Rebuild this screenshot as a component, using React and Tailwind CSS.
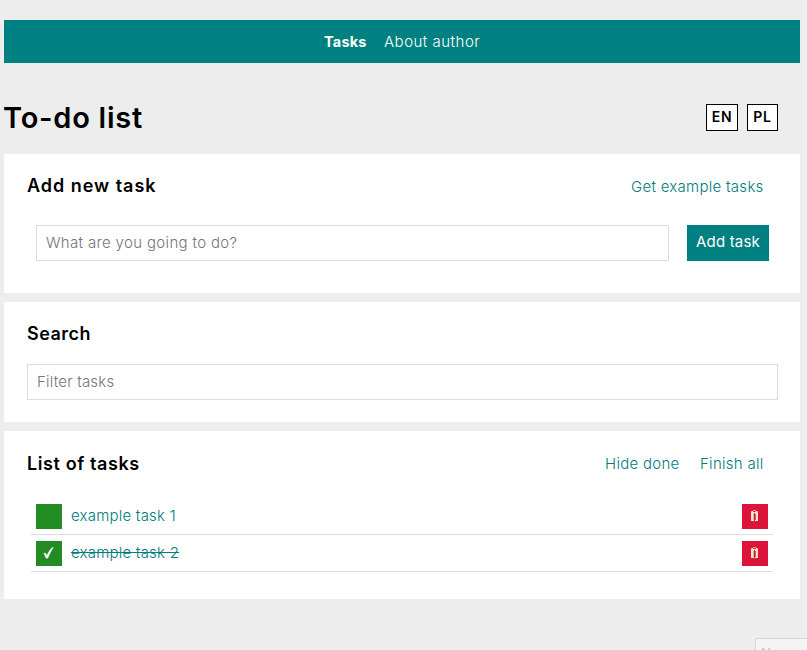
const tasks = [
  { id: 1, name: "example task 1", done: false },
  { id: 2, name: "example task 2", done: true },
];

function TrashIcon() {
  return (
    <svg width="8" height="13" viewBox="0 0 8 13" shapeRendering="crispEdges">
      <path fill="#fbe3c4" d="M0 1h7v2H0zM0 3h3v8H0zM4 3h3v8H4z" />
      <path fill="#e6a79a" d="M2 0h3v1H2zM0 1h1v1H0zM6 1h1v1H6z" />
      <path fill="#c2452f" d="M2 1h3v1H2zM2 11h3v1H2z" />
      <path fill="#dcb0a0" d="M2 4h1v6H2z" />
      <path fill="#a97a83" d="M4 4h1v6H4z" />
    </svg>
  );
}

function CheckIcon() {
  return (
    <svg className="-ml-0.5" width="11" height="12" viewBox="0 0 12 13">
      <path fill="#fff" stroke="#fff" strokeWidth=".4" d="M.8 7.300C1.600 6.300 2.700 6.300 3.200 7.300L4.200 9.200C5.800 5.800 7.700 2.700 9.800.8L11.400.6C9.100 3.800 7.200 7.600 5.400 11.900L3.300 12.300C2.700 10.300 1.800 8.300.8 7.300Z" />
    </svg>
  );
}

function LinkButton({ children, className }) {
  return <button className={`text-left tracking-[0.28px] whitespace-nowrap text-[#007b7b] ${className}`}>{children}</button>;
}

export default function App() {
  return (
    <div className="relative h-[650px] w-[807px] overflow-hidden bg-[#ededed] pt-5 pl-1 font-['Inter','Open_Sans',sans-serif] text-[15px] leading-[18px] font-light text-black">
      <div className="w-[796px]">
        <nav className="flex h-[43px] items-center bg-[#008080] pl-80 text-white">
          <a className="w-[60px] text-[14.500px] font-bold tracking-[0.2px] whitespace-nowrap">Tasks</a>
          <a className="tracking-[0.5px] whitespace-nowrap">About author</a>
        </nav>

        <header className="flex h-[91px] items-center justify-between pt-[18px] pr-[22px]">
          <h1 className="-ml-px text-[29px] leading-9 font-semibold tracking-[0.75px]">To-do list</h1>
          <div className="flex gap-[9px] text-[14px] font-semibold tracking-[0.7px]">
            <button className="h-[27px] w-8 border border-black bg-white pb-0.5">EN</button>
            <button className="h-[27px] w-[31px] border border-black bg-white pb-0.5">PL</button>
          </div>
        </header>

        <section className="h-[139px] bg-white pt-5 pr-[31px] pl-[23px]">
          <div className="flex h-6 items-center justify-between">
            <h2 className="text-[18px] font-semibold tracking-[0.98px]">Add new task</h2>
            <LinkButton className="w-[138px] pt-0.5">Get example tasks</LinkButton>
          </div>
          <form className="mt-[27px] flex gap-[18px] pl-[9px]">
            <input className="h-9 w-[633px] border border-[#dcdcdc] px-[9px] pb-0.5 tracking-[0.34px] placeholder:text-[#757575]" placeholder="What are you going to do?" />
            <button type="button" className="h-9 w-[82px] bg-[#008080] pb-0.5 font-normal tracking-[0.2px] whitespace-nowrap text-white">Add task</button>
          </form>
        </section>

        <section className="mt-[9px] h-[120px] bg-white pt-5 pr-[22px] pl-[23px]">
          <h2 className="text-[18px] leading-6 font-semibold tracking-[0.5px]">Search</h2>
          <input className="mt-[18px] block h-9 w-full border border-[#dcdcdc] px-[9px] pb-0.5 tracking-[0.2px] placeholder:text-[#757575]" placeholder="Filter tasks" />
        </section>

        <section className="mt-[9px] h-[168px] bg-white pt-[21px] pl-[23px]">
          <div className="flex h-6 items-center">
            <h2 className="w-[578px] text-[18px] font-semibold tracking-[0.6px]">List of tasks</h2>
            <LinkButton className="w-[95px]">Hide done</LinkButton>
            <LinkButton className="">Finish all</LinkButton>
          </div>
          <ul className="mt-[22px] ml-1 w-[742px]">
            {tasks.map((task) => (
              <li key={task.id} className="flex h-[37px] items-center border-b border-[#dcdcdc] px-[5px]">
                <button className="flex h-[25px] w-[26px] items-center justify-center bg-[#228b22]">{task.done && <CheckIcon />}</button>
                <span className="ml-[9px] flex-1 tracking-[0.22px] text-[#007b7b]">
                  <span className={task.done ? "line-through" : ""}>{task.name}</span>
                </span>
                <button className="flex h-[25px] w-[26px] items-center justify-center bg-[#dc143c]">
                  <TrashIcon />
                </button>
              </li>
            ))}
          </ul>
        </section>
      </div>

      <div className="absolute top-[638px] left-[755px] h-8 w-[60px] border border-[#d6d6d6] bg-[#f4f4f2] pt-[5px] pl-[5px] text-[13px] font-normal text-[#c0c0c0]">New</div>
    </div>
  );
}
